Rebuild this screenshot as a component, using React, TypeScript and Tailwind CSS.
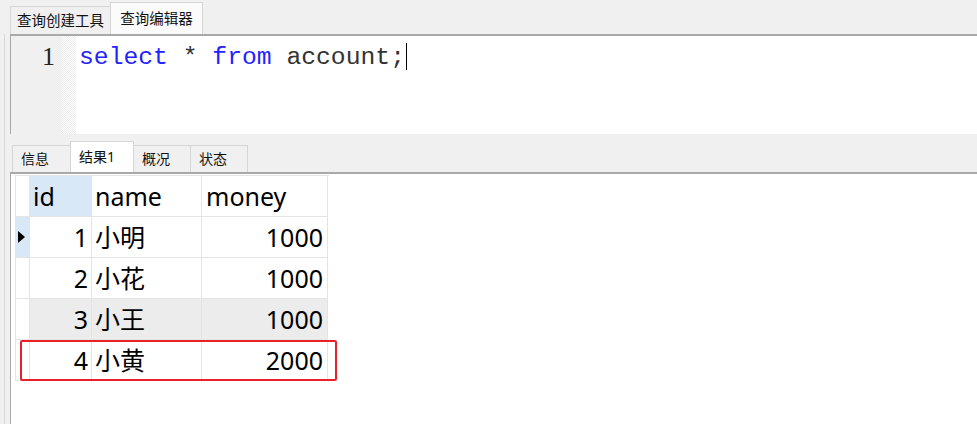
import React from 'react';

const rows = [
    { id: 1, name: '小明', money: 1000 },
    { id: 2, name: '小花', money: 1000 },
    { id: 3, name: '小王', money: 1000 },
    { id: 4, name: '小黄', money: 2000 },
];

const uiFont = "font-['Noto_Sans','Noto_Sans_CJK_SC',sans-serif]";

export default function App() {
    return (
        <div className={`w-[977px] h-[424px] bg-[#f0f0f0] flex flex-col overflow-hidden text-[#111] ${uiFont}`}>
            {/* Top tabs */}
            <div className="h-[34px] flex items-end pl-[10px] shrink-0">
                <div className="h-[28px] w-[101px] flex items-center justify-center border border-b-0 border-[#d6d6d6] bg-[#f0f0f0] text-[14.5px] leading-none">
                    查询创建工具
                </div>
                <div className="h-[32px] w-[93px] flex items-center justify-center border border-b-0 border-[#d6d6d6] bg-[#fbfbfb] text-[14.5px] leading-none -ml-px">
                    查询编辑器
                </div>
            </div>

            <div className="flex-1 ml-[4px] border-l border-[#d8d8d8] pl-[5px] flex flex-col">
                {/* Editor */}
                <div className="h-[100px] shrink-0 flex border-t-2 border-l border-[#a9a9a9] bg-white">
                    <div className="w-[50px] bg-[#f0f0f0] pt-[6px] pr-[6px] text-right font-['Liberation_Serif',serif] text-[26px] leading-[30px] text-[#222]">
                        1
                    </div>
                    <div className="w-[15px] bg-[repeating-conic-gradient(#ececec_0_25%,#ffffff_0_50%)] bg-[length:2px_2px]" />
                    <div className="flex-1 pl-[3px] pt-[6px] font-['Liberation_Mono',monospace] text-[24.7px] leading-[30px] whitespace-pre flex items-start">
                        <span className="text-[#2323ff]">select</span>
                        <span className="text-[#333]"> * </span>
                        <span className="text-[#2323ff]">from</span>
                        <span className="text-[#333]"> account;</span>
                        <span className="inline-block w-px h-[27px] bg-black ml-[1px] mt-[1px]" />
                    </div>
                </div>

                <div className="h-[7px] shrink-0" />

                {/* Result tabs */}
                <div className="h-[31px] flex items-end pl-[2px] shrink-0">
                    {[
                        { label: '信息', w: 'w-[59px]', active: false },
                        { label: '结果1', w: 'w-[64px]', active: true },
                        { label: '概况', w: 'w-[58px]', active: false },
                        { label: '状态', w: 'w-[58px]', active: false },
                    ].map((t) => (
                        <div
                            key={t.label}
                            className={`${t.w} -mr-px flex items-center pl-[8px] border border-b-0 border-[#d6d6d6] text-[14px] leading-none ${
                                t.active ? 'h-[31px] bg-white' : 'h-[27px] bg-[#f0f0f0]'
                            }`}
                        >
                            {t.label}
                        </div>
                    ))}
                </div>

                {/* Result grid panel */}
                <div className="flex-1 bg-white border-t-2 border-l border-[#a9a9a9] pl-[4px] pt-[1px]">
                    <div className="relative w-[314px] border-l border-t border-[#e4e4e4]">
                        <div className="grid grid-cols-[14px_62px_110px_126px] text-[25px] leading-none text-black">
                            {/* header */}
                            <div className="h-[41px] border-r border-b border-[#e4e4e4] bg-white" />
                            <div className="h-[41px] border-r border-b border-[#e4e4e4] bg-[#d9e8f7] flex items-center pl-[3px]">id</div>
                            <div className="h-[41px] border-r border-b border-[#e4e4e4] flex items-center pl-[3px]">name</div>
                            <div className="h-[41px] border-r border-b border-[#e4e4e4] flex items-center pl-[4px]">money</div>

                            {rows.map((r, i) => (
                                <React.Fragment key={r.id}>
                                    <div
                                        className={`h-[41px] border-r border-b border-[#e4e4e4] flex items-center pl-[2px] ${
                                            i === 0 ? 'bg-[#d9e8f7]' : 'bg-white'
                                        }`}
                                    >
                                        {i === 0 && (
                                            <svg width="7" height="12" viewBox="0 0 7 12">
                                                <path d="M0 0 L7 6 L0 12 Z" fill="#000" />
                                            </svg>
                                        )}
                                    </div>
                                    <div
                                        className={`h-[41px] border-r border-b border-[#e4e4e4] flex items-center justify-end pr-[3px] ${
                                            i === 2 ? 'bg-[#ececec]' : ''
                                        }`}
                                    >
                                        {r.id}
                                    </div>
                                    <div
                                        className={`h-[41px] border-r border-b border-[#e4e4e4] flex items-center pl-[3px] ${
                                            i === 2 ? 'bg-[#ececec]' : ''
                                        }`}
                                    >
                                        {r.name}
                                    </div>
                                    <div
                                        className={`h-[41px] border-r border-b border-[#e4e4e4] flex items-center justify-end pr-[4px] ${
                                            i === 2 ? 'bg-[#ececec]' : ''
                                        }`}
                                    >
                                        {r.money}
                                    </div>
                                </React.Fragment>
                            ))}
                        </div>

                        {/* highlight annotation */}
                        <div className="absolute left-[4px] top-[164px] w-[317px] h-[41px] border-[2.5px] border-[#e8202a] rounded-[2px] pointer-events-none" />
                    </div>
                </div>
            </div>
        </div>
    );
}
